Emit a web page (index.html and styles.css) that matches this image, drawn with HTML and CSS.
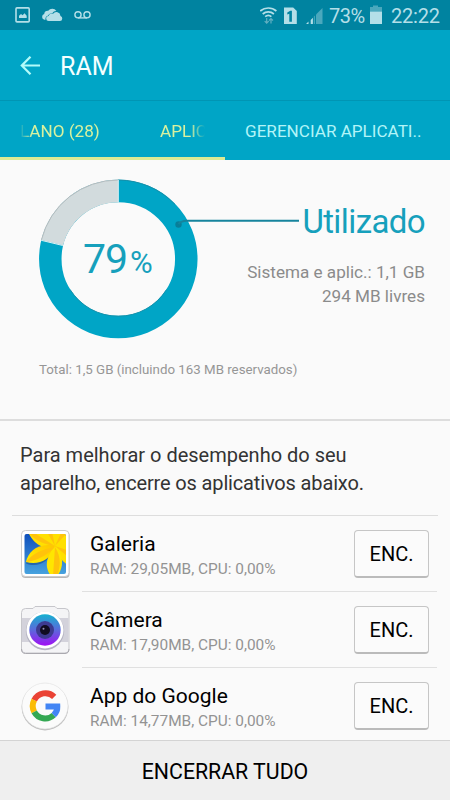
FILE: index.html
```html
<!DOCTYPE html>
<html lang="pt-BR">
<head>
    <meta charset="UTF-8">
    <title>RAM</title>
    <meta name="viewport" content="width=device-width, initial-scale=1.0">
    <link rel="stylesheet" href="styles.css">
</head>
<body>
    <div class="status-bar">
        <svg class="status-left" width="80" height="20" viewBox="0 0 80 20">
            <rect x="2" y="2.900" width="13.200" height="14" rx="1" fill="none" stroke="#b4dfe8" stroke-width="1.600"/>
            <path d="M5 13v-2.300l2-1.800 1.600 1.400 1.900-2 2.200 2.400V13z" fill="#b4dfe8"/>
            <path d="M31.500 14.700h-1.200a2.900 2.900 0 0 1-.1-5.600 3.800 3.800 0 0 1 4-3.300 5 5 0 0 1 8.200.2 4.500 4.500 0 0 0-4.100 2.300 4.200 4.200 0 0 0-4.500 2.500 3.500 3.500 0 0 0-2.300 3.900z" fill="#b4dfe8"/>
            <path d="M34.800 16.100a2.500 2.500 0 0 1-.2-5 3.300 3.300 0 0 1 4.500-2.400 4.100 4.100 0 0 1 7.400 2.200 2.700 2.700 0 0 1-.5 5.200z" fill="#b4dfe8"/>
            <g fill="none" stroke="#b4dfe8" stroke-width="1.400">
                <circle cx="64" cy="9.800" r="3.100"/>
                <circle cx="73" cy="9.800" r="3.100"/>
                <path d="M64 12.900h9"/>
            </g>
        </svg>
        <div class="status-right">
            <svg width="66" height="20" viewBox="0 0 66 20">
                <g fill="none" stroke="#b4dfe8" stroke-width="1.700">
                    <path d="M.2 6A12.500 12.500 0 0 1 16.400 6"/>
                    <path d="M2.700 9a8.500 8.500 0 0 1 11.200 0"/>
                    <path d="M5.200 11.700a4.700 4.700 0 0 1 6.200 0"/>
                </g>
                <g fill="none" stroke="#62afc1" stroke-width="1.200">
                    <path d="M6.700 13v5M4.700 16.200l2 2 2-2M11 18.500v-5M9 15.500l2-2 2 2"/>
                </g>
                <path d="M24 2.500h9.200l3.600 3.400V19H24z" fill="#b4dfe8"/>
                <path d="M27.300 7.500l3-1.800h1.600v11h-2.600V8.800l-2 .7z" fill="#0083a0"/>
                <path d="M62.500 3v16H56V9.500z" fill="#4aa8bd"/>
                <path d="M46 19l2.500-2.500V19zM50.700 15l2.200-2.200V19h-2.200z" fill="#b4dfe8"/>
                <path d="M53.800 11.700l1.100-1.100V19h-1.100z" fill="#4aa8bd"/>
            </svg>
            <span class="battery-level">73%</span>
            <svg class="battery" width="14" height="20" viewBox="0 0 14 20">
                <path d="M4 .5h5V2h4v4.500H1V2h3z" fill="#4aa8bd"/>
                <path d="M1 6.500h12V19H1z" fill="#b4dfe8"/>
            </svg>
            <span class="clock">22:22</span>
        </div>
    </div>

    <div class="app-bar">
        <svg width="22" height="20" viewBox="0 0 22 20">
            <path d="M21 9.500H3M11.500.7L2.800 9.500l8.700 8.800" fill="none" stroke="#b2fbfa" stroke-width="2.200"/>
        </svg>
        <h1>RAM</h1>
    </div>

    <div class="tabs">
        <div class="tab active">
            <div class="marquee">
                <span class="current">LANO (28)</span>
                <span class="next">APLIC</span>
            </div>
        </div>
        <div class="tab">GERENCIAR APLICATI..</div>
    </div>

    <div class="summary">
        <svg class="donut" width="264" height="164" viewBox="0 0 264 164">
            <circle cx="83.300" cy="83" r="68" fill="none" stroke="#00a5c6" stroke-width="22.500"/>
            <path d="M6.200 64A79.300 79.300 0 0 1 83.300 3.700v22.500A57 57 0 0 0 28 69.300z" fill="#d2dbdd"/>
            <path d="M6.400 64A79 79 0 0 1 83.300 4" fill="none" stroke="#b4bcbe" stroke-width="1"/>
            <path d="M83.300 4A79 79 0 0 1 140 28.500" fill="none" stroke="#168fa9" stroke-width="1"/>
            <path d="M35 113.500A57 57 0 0 0 131.600 113.500" fill="none" stroke="#1592ac" stroke-width="1"/>
            <path d="M83.300 4v22.500M6.200 64.300l21.600 5.200" stroke="#d8f1f5" stroke-width="1"/>
            <circle cx="143.500" cy="48.500" r="3.200" fill="#087f99"/>
            <path d="M143.500 48q3-3.200 8-3.200h112.500" fill="none" stroke="#16849d" stroke-width="2"/>
            <text class="percent" x="48" y="96.500">79<tspan class="percent-sign" x="95">%</tspan></text>
        </svg>
        <div class="usage">
            <h2>Utilizado</h2>
            <p>Sistema e aplic.: 1,1 GB</p>
            <p>294 MB livres</p>
        </div>
        <p class="total">Total: 1,5 GB (incluindo 163 MB reservados)</p>
    </div>

    <p class="hint">Para melhorar o desempenho do seu<br><span>aparelho, encerre os aplicativos abaixo.</span></p>

    <div class="app-list">
        <div class="app">
            <svg class="app-icon" width="50" height="50" viewBox="0 0 50 50">
                <defs>
                    <linearGradient id="sky" x1="0" y1="0" x2="0" y2="1">
                        <stop offset="0" stop-color="#0d4dbb"/>
                        <stop offset="1" stop-color="#48a4df"/>
                    </linearGradient>
                    <linearGradient id="petal" x1="1" y1="0" x2="0" y2="1">
                        <stop offset="0" stop-color="#ffc400"/>
                        <stop offset="1" stop-color="#fff000"/>
                    </linearGradient>
                    <clipPath id="photo"><rect x="4.500" y="5" width="41.500" height="40" rx="2"/></clipPath>
                </defs>
                <rect x="1.500" y="2.500" width="48" height="46.500" rx="4" fill="#b7b7b7"/>
                <rect x="1.500" y="1.500" width="47.500" height="46" rx="4" fill="#fff" stroke="#ccc"/>
                <g clip-path="url(#photo)">
                    <path d="M4 4h43v42H4z" fill="url(#sky)"/>
                    <path d="M35 20C20 18 8 25 6 34.500 17 39 28 34 35 20z" fill="#123f83" opacity=".5"/>
                    <path d="M8 3h40v33Q40 32 35 18 17 22 8 3z" fill="#ffe000"/>
                    <path d="M36 17C18 13 8 23 6 33 18 36 30 32 36 17z" fill="url(#petal)"/>
                    <path d="M35 17C26 28 24 38 31 47h6c8-10 6-22-2-30z" fill="#ffe600"/>
                    <path d="M35 17C26 16 15 12 8 3h5zM35 18C22 20 12 25 6 33 16 32 26 27 35 18zM35 18L33 47h4c4-10 4-20-2-29zM35 17l12 4v6zM35 17l6-13h6zM35 17L27 3h5z" fill="#ffc30b"/>
                </g>
            </svg>
            <div class="app-info">
                <div class="app-name">Galeria</div>
                <div class="app-usage">RAM: 29,05MB, CPU: 0,00%</div>
            </div>
            <button>ENC.</button>
        </div>
        <div class="app">
            <svg class="app-icon" width="50" height="50" viewBox="0 0 50 50">
                <defs>
                    <linearGradient id="lens" x1="0" y1="0" x2="0" y2="1">
                        <stop offset="0" stop-color="#16b2d0"/>
                        <stop offset=".5" stop-color="#5b68dc"/>
                        <stop offset="1" stop-color="#a010f4"/>
                    </linearGradient>
                </defs>
                <path d="M5.500 3.500H13l2-2h20l2 2h8q4 0 4 4V44q0 4-4 4H5.500q-4 0-4-4V7.500q0-4 4-4z" fill="#f4f4f6" stroke="#c6c6cb"/>
                <path d="M2 13h46.500v24H2z" fill="#d3d2db"/>
                <path d="M1.500 44q0 4.500 4 4.500H45q4 0 4-4.500" fill="none" stroke="#aaa9af"/>
                <circle cx="25" cy="26" r="19.200" fill="#b5b4c3"/>
                <circle cx="25" cy="25" r="18.500" fill="#fff"/>
                <circle cx="25" cy="25" r="15.700" fill="url(#lens)"/>
                <circle cx="25" cy="25" r="9" fill="#3d3a91"/>
                <circle cx="25" cy="25" r="5" fill="#100c20"/>
                <circle cx="23.500" cy="23.800" r="1" fill="#958eb5"/>
            </svg>
            <div class="app-info">
                <div class="app-name">Câmera</div>
                <div class="app-usage">RAM: 17,90MB, CPU: 0,00%</div>
            </div>
            <button>ENC.</button>
        </div>
        <div class="app">
            <svg class="app-icon" width="50" height="50" viewBox="0 0 50 50">
                <circle cx="25" cy="26" r="23.400" fill="#bdbdbd"/>
                <circle cx="25" cy="25" r="23" fill="#fbfbfb" stroke="#e1e1e1" stroke-width=".6"/>
                <g fill="none" stroke-width="6">
                    <path d="M34.200 15.800A12.500 12.500 0 0 0 14.200 19.200" stroke="#ea4335"/>
                    <path d="M14.200 19.200a12.500 12.500 0 0 0 0 11.600" stroke="#fbbc05"/>
                    <path d="M14.200 30.800a12.500 12.500 0 0 0 19.500 3.300" stroke="#34a853"/>
                    <path d="M33.700 34.100Q37.500 30.500 37.300 25.500H25.500" stroke="#4285f4"/>
                </g>
            </svg>
            <div class="app-info">
                <div class="app-name">App do Google</div>
                <div class="app-usage">RAM: 14,77MB, CPU: 0,00%</div>
            </div>
            <button>ENC.</button>
        </div>
    </div>

    <div class="end-all">ENCERRAR TUDO</div>
</body>
</html>
```
FILE: styles.css
```css
* {
    box-sizing: border-box;
}
body {
    font-family: Roboto, sans-serif;
    margin: 0;
    height: 800px;
    overflow: hidden;
    display: flex;
    flex-direction: column;
    color: #000;
    background-color: #fafafa;
}
h1, h2, p {
    margin: 0;
    font-weight: 400;
}
svg {
    display: block;
    flex: none;
}
.status-bar {
    height: 30px;
    flex: none;
    display: flex;
    justify-content: space-between;
    padding: 5px 9px 0 14px;
    background-color: #0083a0;
    color: #b4dfe8;
}
.status-right {
    display: flex;
    font-size: 20px;
    line-height: 22px;
}
.battery-level {
    width: 38px;
    margin-left: 3px;
    letter-spacing: -0.5px;
}
.battery {
    margin-left: 2px;
}
.clock {
    width: 50px;
    margin-left: 8px;
    letter-spacing: -0.2px;
}
.app-bar {
    height: 70px;
    flex: none;
    display: flex;
    align-items: center;
    gap: 19px;
    padding: 1px 20px 0 19px;
    background-color: #00a5c6;
}
.app-bar h1 {
    font-size: 25px;
    line-height: 30px;
    color: #f4ffff;
    padding-top: 2px;
}
.tabs {
    height: 60px;
    flex: none;
    display: flex;
    border-top: 1px solid #0095b4;
    background-color: #00a5c6;
}
.tab {
    width: 225px;
    padding: 19px 0 0 20px;
    font-size: 17.1px;
    line-height: 22px;
    white-space: nowrap;
    color: #b2f4f8;
}
.tab.active {
    color: #d9f19f;
    border-bottom: 3px solid #dcea94;
}
.marquee {
    width: 185px;
    overflow: hidden;
    display: flex;
    -webkit-mask-image: linear-gradient(to right, transparent, #000 12px, #000 170px, transparent);
    mask-image: linear-gradient(to right, transparent, #000 12px, #000 170px, transparent);
}
.marquee .current {
    width: 140px;
    flex: none;
}
.summary {
    height: 261px;
    flex: none;
    display: grid;
    grid-template-columns: 264px 126px;
    grid-template-rows: 164px auto;
    padding: 16px 25px 0 35px;
    border-bottom: 2px solid #ddd;
}
.percent {
    font-size: 41px;
    letter-spacing: -1px;
    fill: #16a0bc;
}
.percent-sign {
    font-size: 31px;
}
.usage {
    display: flex;
    flex-direction: column;
    align-items: flex-end;
    white-space: nowrap;
    padding-top: 26px;
    color: #8b8b8b;
}
.usage h2 {
    font-size: 33px;
    line-height: 40px;
    margin-bottom: 18px;
    letter-spacing: -0.6px;
    color: #16a0bc;
}
.usage p {
    font-size: 17.1px;
    line-height: 24px;
}
.total {
    grid-column: 1 / 3;
    padding: 21px 0 0 4px;
    font-size: 13.3px;
    line-height: 18px;
    color: #969696;
}
.hint {
    height: 94px;
    flex: none;
    padding: 20px 20px 0;
    font-size: 20px;
    line-height: 28px;
    color: #333;
}
.hint span {
    letter-spacing: -0.15px;
}
.app-list {
    height: 225px;
    flex: none;
    margin: 0 12px;
    border-top: 1px solid #ddd;
}
.app {
    height: 76px;
    display: flex;
    padding: 13px 9px 0 8px;
}
.app-info {
    flex: 1;
    height: 63px;
    padding-left: 20px;
    margin-right: -83px;
    background: linear-gradient(#e0e0e0, #e0e0e0) 12px 100% / calc(100% - 12px) 1px no-repeat;
}
.app:last-child .app-info {
    background: none;
}
.app-name {
    font-size: 21px;
    line-height: 31px;
}
.app-usage {
    font-size: 15.4px;
    line-height: 19px;
    color: #939393;
}
.app button {
    position: relative;
    width: 75px;
    height: 48px;
    margin-top: 1px;
    padding: 0;
    font-family: inherit;
    font-size: 20px;
    color: #000;
    background-color: #fbfbfb;
    border: 1px solid #c6c6c6;
    border-bottom: 2px solid #bbb;
    border-radius: 4px;
}
.end-all {
    height: 60px;
    flex: none;
    position: relative;
    border-top: 1px solid #d4d4d4;
    background-color: #efefef;
    font-size: 21.3px;
    line-height: 61px;
    text-align: center;
}
```
